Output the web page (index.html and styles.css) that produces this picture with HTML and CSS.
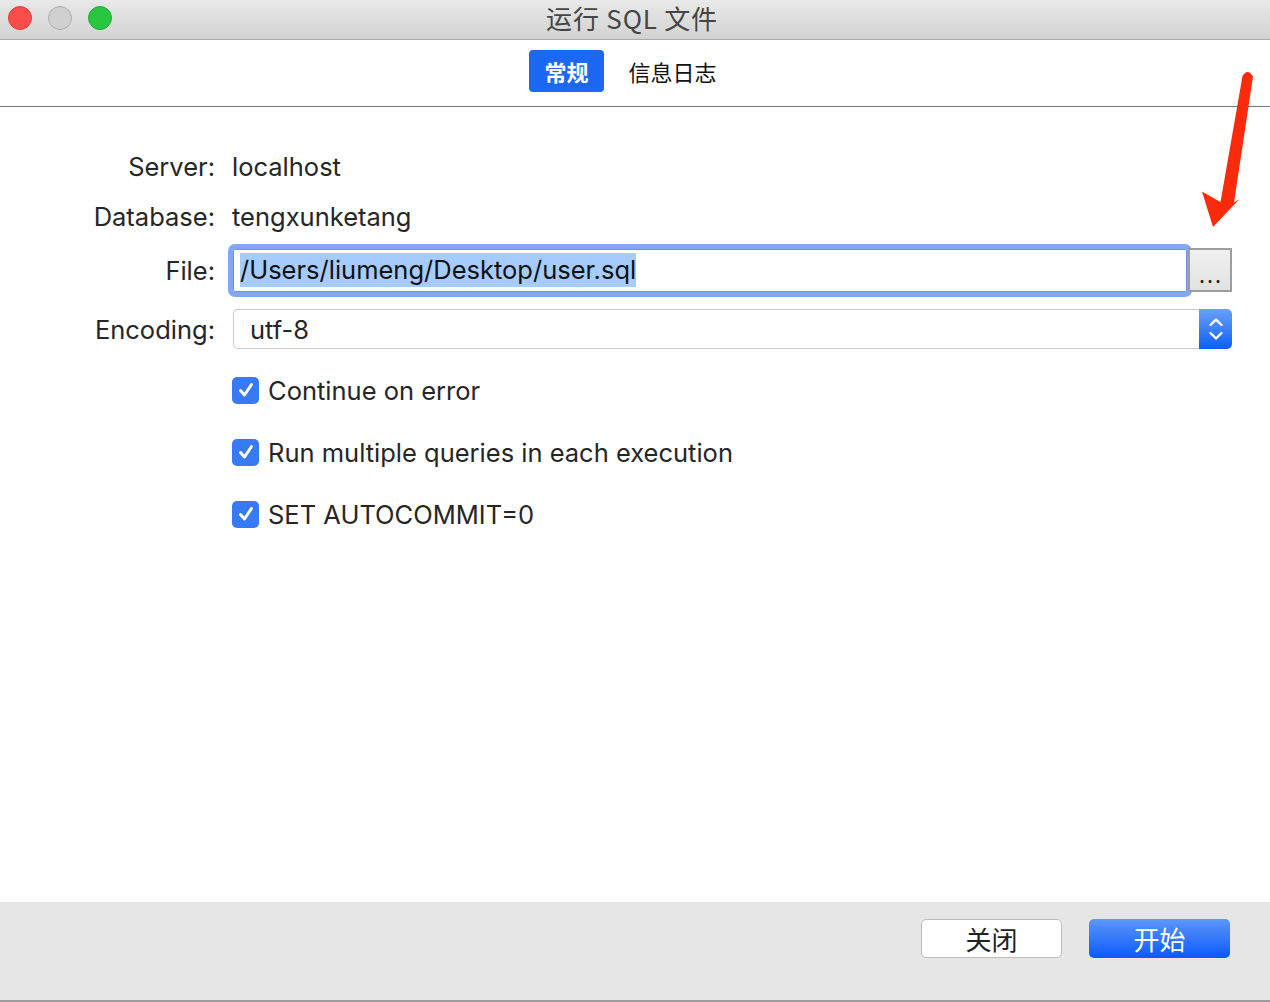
FILE: index.html
```html
<!DOCTYPE html>
<html lang="zh">
<head>
<meta charset="utf-8">
<title>运行 SQL 文件</title>
<link rel="stylesheet" href="styles.css">
</head>
<body>
<div class="window">
  <header class="titlebar">
    <div class="lights">
      <span class="light red"></span>
      <span class="light gray"></span>
      <span class="light green"></span>
    </div>
    <div class="title">运行 SQL 文件</div>
  </header>
  <nav class="tabs">
    <span class="tab active">常规</span>
    <span class="tab">信息日志</span>
  </nav>
  <main class="content">
    <div class="row row-text">
      <div class="label">Server:</div>
      <div class="value">localhost</div>
    </div>
    <div class="row row-text">
      <div class="label">Database:</div>
      <div class="value">tengxunketang</div>
    </div>
    <div class="row row-file">
      <div class="label">File:</div>
      <div class="file-wrap">
        <div class="file-input"><span class="sel">/Users/liumeng/Desktop/user.sql</span></div>
        <div class="browse"><span class="dots">...</span></div>
      </div>
    </div>
    <div class="row row-select">
      <div class="label">Encoding:</div>
      <div class="select">
        <div class="select-value">utf-8</div>
        <div class="select-btn">
          <svg width="16" height="28" viewBox="0 0 16 28"><path d="M2.5 10 L8 4.5 L13.5 10" fill="none" stroke="#fff" stroke-width="2.4" stroke-linecap="round" stroke-linejoin="round"/><path d="M2.5 18 L8 23.5 L13.5 18" fill="none" stroke="#fff" stroke-width="2.4" stroke-linecap="round" stroke-linejoin="round"/></svg>
        </div>
      </div>
    </div>
    <div class="row row-check">
      <div class="label"></div>
      <label class="check"><span class="box"><svg width="20" height="20" viewBox="0 0 20 20"><path d="M4.5 10.5 L8.5 15 L15.5 4.5" fill="none" stroke="#fff" stroke-width="3" stroke-linecap="round" stroke-linejoin="round"/></svg></span>Continue on error</label>
    </div>
    <div class="row row-check">
      <div class="label"></div>
      <label class="check"><span class="box"><svg width="20" height="20" viewBox="0 0 20 20"><path d="M4.5 10.5 L8.5 15 L15.5 4.5" fill="none" stroke="#fff" stroke-width="3" stroke-linecap="round" stroke-linejoin="round"/></svg></span>Run multiple queries in each execution</label>
    </div>
    <div class="row row-check">
      <div class="label"></div>
      <label class="check"><span class="box"><svg width="20" height="20" viewBox="0 0 20 20"><path d="M4.5 10.5 L8.5 15 L15.5 4.5" fill="none" stroke="#fff" stroke-width="3" stroke-linecap="round" stroke-linejoin="round"/></svg></span>SET AUTOCOMMIT=0</label>
    </div>
  </main>
  <footer class="footer">
    <button class="btn">关闭</button>
    <button class="btn primary">开始</button>
  </footer>
  <svg class="arrow" width="70" height="170" viewBox="1195 66 70 170">
    <path d="M1242.5 76 Q1247.5 68 1253 76.5 L1234 202.5 L1239.5 199 L1213 227 L1202 191.5 L1220.5 202 Z" fill="#fa2a0a"/>
  </svg>
</div>
</body>
</html>
```

FILE: styles.css
```css
* { box-sizing: border-box; }
html, body { margin: 0; padding: 0; }
body {
  width: 1270px;
  height: 1002px;
  background: #ffffff;
  font-family: Inter, "Noto Sans", "Noto Sans CJK SC", sans-serif;
  color: #262626;
  overflow: hidden;
}
.window {
  position: relative;
  width: 1270px;
  height: 1002px;
  display: flex;
  flex-direction: column;
}
.titlebar {
  height: 40px;
  flex: none;
  background: linear-gradient(#e9e9e9, #d2d2d2);
  border-bottom: 1px solid #a9a9a9;
  display: flex;
  align-items: center;
  position: relative;
}
.lights {
  display: flex;
  gap: 16px;
  padding-left: 8px;
  position: absolute;
  left: 0;
  top: 6px;
}
.light {
  width: 24px;
  height: 24px;
  border-radius: 50%;
}
.red { background: #fd4d4b; border: 1px solid #e23c3a; }
.gray { background: #d0d0d0; border: 1px solid #aeaeae; }
.green { background: #28c73f; border: 1px solid #1eaa2f; }
.title {
  flex: 1;
  text-align: center;
  font-family: "Noto Sans CJK SC", Inter, sans-serif;
  font-size: 26px;
  letter-spacing: 0.8px;
  color: #454545;
  line-height: 36px;
  margin-left: -6px;
  padding-bottom: 4px;
}
.tabs {
  height: 67px;
  flex: none;
  border-bottom: 1px solid #777;
  display: flex;
  justify-content: center;
  align-items: center;
  gap: 25px;
  font-family: "Noto Sans CJK SC", sans-serif;
  font-size: 22px;
  padding-right: 24px;
  padding-bottom: 4px;
}
.tab {
  color: #111;
  height: 42px;
  line-height: 42px;
}
.tab.active {
  background: #1d67f5;
  color: #fff;
  font-weight: 700;
  padding: 0 15px;
  border-radius: 4px;
}
.content {
  flex: 1;
  padding: 34px 38px 0 0;
  display: flex;
  flex-direction: column;
}
.row {
  display: grid;
  grid-template-columns: 215px 1fr;
  column-gap: 17px;
  align-items: center;
  font-size: 25.5px;
}
.label {
  text-align: right;
  color: #262626;
}
.value { color: #262626; }
.row-text { height: 50px; }
.row-file {
  height: 54px;
  margin-top: 2px;
  column-gap: 13px;
}
.file-wrap {
  display: flex;
  align-items: center;
  height: 54px;
}
.file-input {
  flex: 1;
  height: 53px;
  border: 5px solid #82a7f3;
  border-radius: 7px;
  box-shadow: inset 0 0 0 1px #6e92df;
  background: #fff;
  display: flex;
  align-items: center;
  padding-left: 7px;
  color: #111;
}
.sel {
  background: #a6cbfd;
  line-height: 34px;
  height: 34px;
}
.browse {
  width: 44px;
  height: 44px;
  margin-left: -4px;
  border: 2px solid #9d9d9d;
  background: linear-gradient(#f0f0f0, #e2e2e2);
  display: flex;
  align-items: flex-end;
  justify-content: center;
}
.dots {
  font-size: 18px;
  font-weight: 700;
  color: #222;
  line-height: 18px;
  letter-spacing: 2px;
  padding-left: 2px;
  padding-bottom: 4px;
}
.row-select {
  height: 40px;
  margin-top: 12px;
  column-gap: 18px;
}
.select {
  height: 40px;
  display: flex;
}
.select-value {
  flex: 1;
  border: 1px solid #cbcbcb;
  border-right: none;
  border-radius: 5px 0 0 5px;
  display: flex;
  align-items: center;
  padding-left: 16px;
  color: #262626;
}
.select-btn {
  width: 33px;
  border-radius: 0 5px 5px 0;
  background: linear-gradient(#6aa2f9, #0c5efc);
  display: flex;
  align-items: center;
  justify-content: center;
}
.row-check {
  height: 62px;
}
.row-select + .row-check { margin-top: 10px; }
.check {
  display: flex;
  align-items: center;
  gap: 9px;
  color: #262626;
}
.box {
  width: 27px;
  height: 27px;
  border-radius: 5px;
  background: #3879f6;
  display: flex;
  align-items: center;
  justify-content: center;
}
.footer {
  height: 100px;
  flex: none;
  background: #e6e6e6;
  border-bottom: 2px solid #9c9c9c;
  display: flex;
  justify-content: flex-end;
  align-items: flex-start;
  gap: 27px;
  padding: 17px 40px 0 0;
}
.btn {
  width: 141px;
  height: 39px;
  border-radius: 5px;
  border: 1px solid #bcbcbc;
  background: #fff;
  font-family: "Noto Sans CJK SC", sans-serif;
  font-size: 26px;
  color: #222;
  line-height: 37px;
  padding: 0;
}
.btn.primary {
  border: none;
  background: linear-gradient(#5d97f9, #0a59fe);
  color: #fff;
}
.arrow {
  position: absolute;
  left: 1195px;
  top: 66px;
}
```
